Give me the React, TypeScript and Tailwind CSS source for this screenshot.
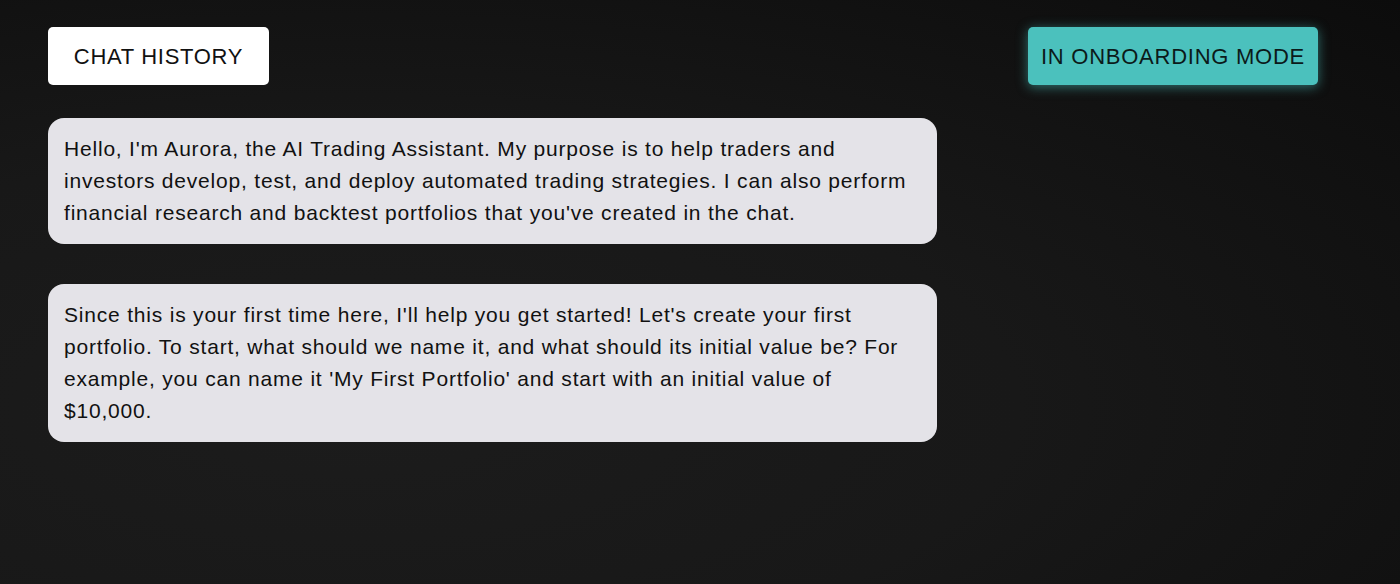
const MESSAGES = [
  "Hello, I'm Aurora, the AI Trading Assistant. My purpose is to help traders and investors develop, test, and deploy automated trading strategies. I can also perform financial research and backtest portfolios that you've created in the chat.",
  "Since this is your first time here, I'll help you get started! Let's create your first portfolio. To start, what should we name it, and what should its initial value be? For example, you can name it 'My First Portfolio' and start with an initial value of $10,000.",
]

export default function App() {
  return (
    <div
      className="min-h-[584px] w-full bg-[radial-gradient(ellipse_at_25%_70%,#1c1c1c_0%,#181818_45%,#0c0c0c_100%)] px-12 pt-[27px] font-['Liberation_Sans',Arial,sans-serif] text-[#111]"
    >
      {/* Top bar */}
      <div className="flex items-center justify-between pr-[34px]">
        <button className="h-[58px] w-[221px] rounded-[5px] bg-white text-[22px] tracking-[0.7px] text-[#111]">
          CHAT HISTORY
        </button>
        <button className="h-[58px] w-[290px] rounded-[5px] bg-[#4bc1bd] text-[22px] tracking-[0.75px] text-[#0b1a1a] shadow-[0_2px_12px_rgba(75,193,189,0.55)]">
          IN ONBOARDING MODE
        </button>
      </div>

      {/* Messages */}
      <div className="mt-[33px] flex w-[889px] flex-col gap-10">
        {MESSAGES.map((msg) => (
          <div
            key={msg.slice(0, 12)}
            className="rounded-2xl bg-[#e4e3e8] px-4 py-[15px] text-[21px] leading-8 tracking-[0.8px] text-[#111]"
          >
            {msg}
          </div>
        ))}
      </div>
    </div>
  )
}
